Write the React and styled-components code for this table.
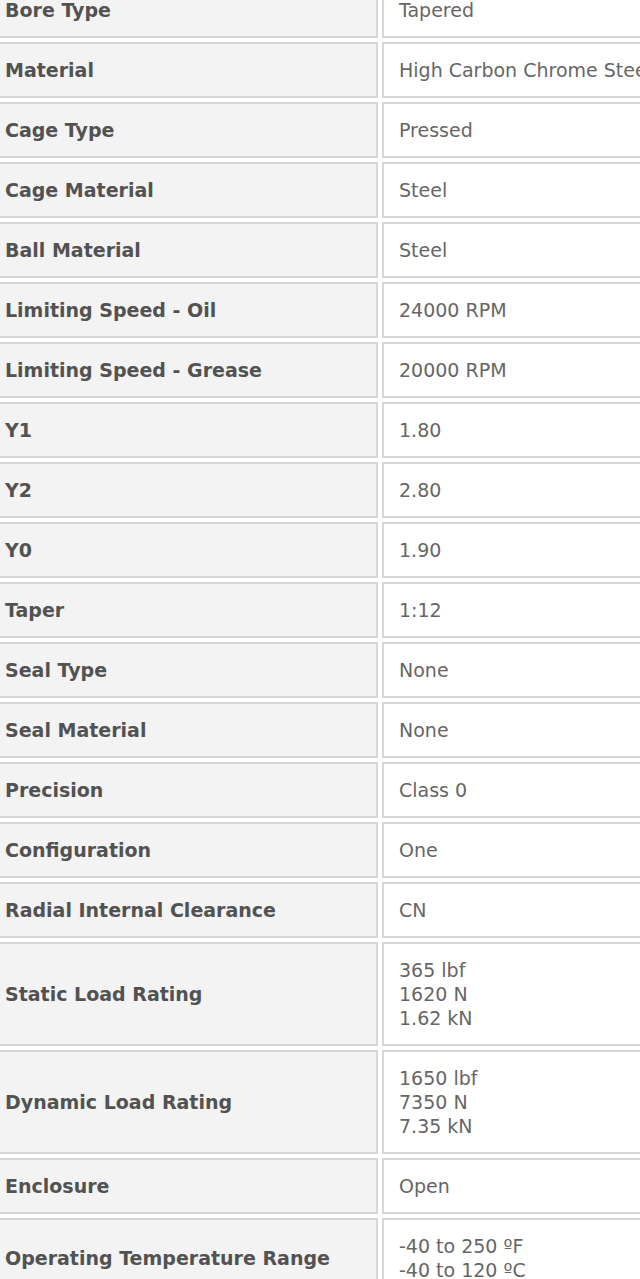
import React from 'react'
import styled, { createGlobalStyle } from 'styled-components'

const GlobalStyle = createGlobalStyle`
  html, body {
    margin: 0;
    padding: 0;
    background: #ffffff;
    overflow: hidden;
  }
`

const specs = [
  ['Bore Type', ['Tapered']],
  ['Material', ['High Carbon Chrome Steel']],
  ['Cage Type', ['Pressed']],
  ['Cage Material', ['Steel']],
  ['Ball Material', ['Steel']],
  ['Limiting Speed - Oil', ['24000 RPM']],
  ['Limiting Speed - Grease', ['20000 RPM']],
  ['Y1', ['1.80']],
  ['Y2', ['2.80']],
  ['Y0', ['1.90']],
  ['Taper', ['1:12']],
  ['Seal Type', ['None']],
  ['Seal Material', ['None']],
  ['Precision', ['Class 0']],
  ['Configuration', ['One']],
  ['Radial Internal Clearance', ['CN']],
  ['Static Load Rating', ['365 lbf', '1620 N', '1.62 kN']],
  ['Dynamic Load Rating', ['1650 lbf', '7350 N', '7.35 kN']],
  ['Enclosure', ['Open']],
  ['Operating Temperature Range', ['-40 to 250 ºF', '-40 to 120 ºC']],
]

const Page = styled.div`
  width: 640px;
  height: 1279px;
  overflow: hidden;
`

const SpecTable = styled.table`
  border-collapse: separate;
  border-spacing: 4px;
  margin: -22px 0 0 -15px;
  width: 900px;
  table-layout: fixed;
  font-family: "DejaVu Sans", "Liberation Sans", sans-serif;
  font-size: 19px;
  line-height: 24px;
`

const LabelCell = styled.th`
  width: 357px;
  background: #f3f3f3;
  border: 2px solid #d6d6d6;
  padding: 14px 14px;
  text-align: left;
  vertical-align: middle;
  font-weight: bold;
  color: #525252;
  white-space: nowrap;
`

const ValueCell = styled.td`
  background: #ffffff;
  border: 2px solid #d6d6d6;
  padding: 14px 15px;
  vertical-align: middle;
  color: #666666;
  white-space: nowrap;
`

const Line = styled.div``

export default function App() {
  return (
    <Page>
      <GlobalStyle />
      <SpecTable>
        <tbody>
          {specs.map(([label, values]) => (
            <tr key={label}>
              <LabelCell>{label}</LabelCell>
              <ValueCell>
                {values.map((v) => (
                  <Line key={v}>{v}</Line>
                ))}
              </ValueCell>
            </tr>
          ))}
        </tbody>
      </SpecTable>
    </Page>
  )
}
